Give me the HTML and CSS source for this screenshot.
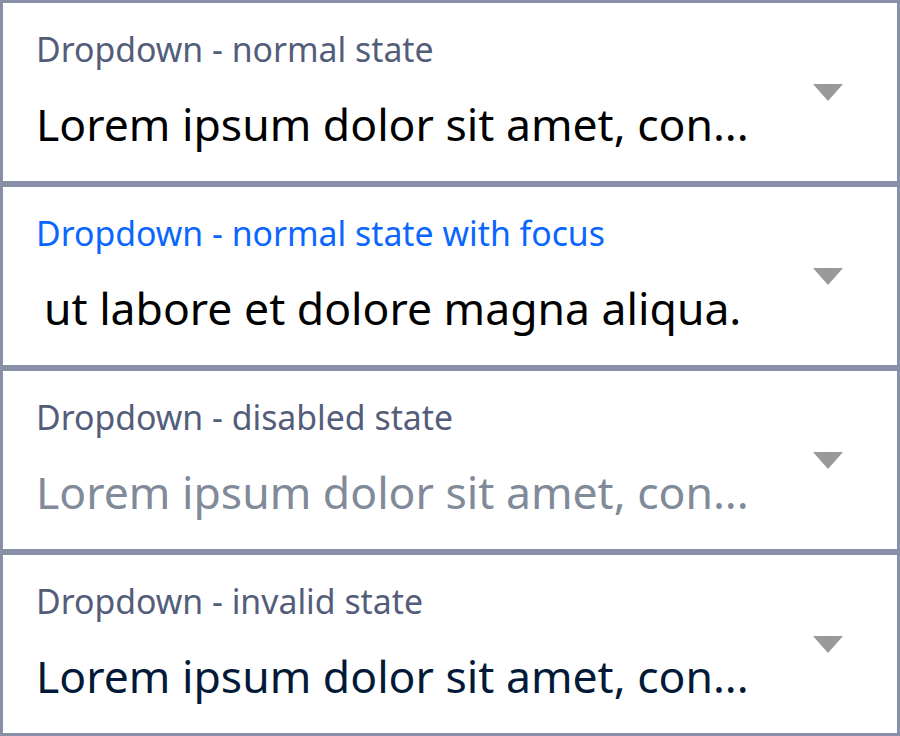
FILE: index.html
```html
<!DOCTYPE html>
<html>
<head>
<meta charset="utf-8">
<link rel="stylesheet" href="styles.css">
</head>
<body>
<div class="stack">
  <div class="dropdown">
    <div class="text">
      <div class="label">Dropdown - normal state</div>
      <div class="value">Lorem ipsum dolor sit amet, con...</div>
    </div>
    <span class="arrow"></span>
  </div>
  <div class="dropdown focus">
    <div class="text">
      <div class="label">Dropdown - normal state with focus</div>
      <div class="value scrolled">ut labore et dolore magna aliqua.</div>
    </div>
    <span class="arrow"></span>
  </div>
  <div class="dropdown disabled">
    <div class="text">
      <div class="label">Dropdown - disabled state</div>
      <div class="value">Lorem ipsum dolor sit amet, con...</div>
    </div>
    <span class="arrow"></span>
  </div>
  <div class="dropdown invalid">
    <div class="text">
      <div class="label">Dropdown - invalid state</div>
      <div class="value">Lorem ipsum dolor sit amet, con...</div>
    </div>
    <span class="arrow"></span>
  </div>
</div>
</body>
</html>
```

FILE: styles.css
```css
html, body {
  margin: 0;
  padding: 0;
  background: #ffffff;
}

.stack {
  display: flex;
  flex-direction: column;
  width: 900px;
}

.dropdown {
  box-sizing: border-box;
  height: 184px;
  border: 3px solid #8790a7;
  display: flex;
  align-items: flex-start;
  background: #ffffff;
  font-family: "Noto Sans", "Open Sans", sans-serif;
}

.text {
  flex: 1;
  min-width: 0;
  padding-left: 33px;
  padding-top: 26px;
}

.label {
  font-size: 33.8px;
  line-height: 40px;
  color: #535d7a;
  white-space: nowrap;
}

.value {
  margin-top: 27px;
  font-size: 44.5px;
  line-height: 56px;
  color: #000000;
  white-space: nowrap;
}

.value.scrolled {
  padding-left: 8px;
}

.focus .label {
  color: #0a66ff;
}

.disabled .value {
  color: #808a99;
}

.invalid .value {
  color: #021a38;
}

.arrow {
  align-self: center;
  width: 0;
  height: 0;
  margin-right: 54px;
  border-left: 15px solid transparent;
  border-right: 15px solid transparent;
  border-top: 17px solid #999999;
}
```
